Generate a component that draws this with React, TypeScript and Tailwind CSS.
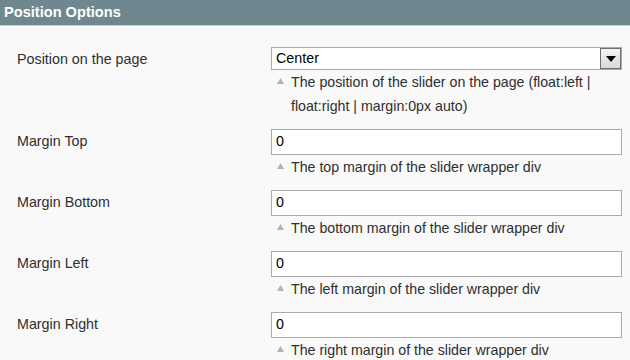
const rows = [
  {
    label: 'Position on the page',
    kind: 'select',
    value: 'Center',
    hint: 'The position of the slider on the page (float:left | float:right | margin:0px auto)',
  },
  { label: 'Margin Top', kind: 'text', value: '0', hint: 'The top margin of the slider wrapper div' },
  { label: 'Margin Bottom', kind: 'text', value: '0', hint: 'The bottom margin of the slider wrapper div' },
  { label: 'Margin Left', kind: 'text', value: '0', hint: 'The left margin of the slider wrapper div' },
  { label: 'Margin Right', kind: 'text', value: '0', hint: 'The right margin of the slider wrapper div' },
];

const Bullet = () => (
  <svg width="7" height="6" viewBox="0 0 7 6" className="mt-[8px] shrink-0">
    <path d="M3.5 0 L7 6 L0 6 Z" fill="#a8b7bc" />
  </svg>
);

export default function App() {
  return (
    <div className="w-[630px] h-[360px] overflow-hidden bg-[#f9f9f9] font-['Liberation_Sans',Arial,sans-serif] text-[#2f2f2f]">
      <div className="h-[26px] bg-[#6f878f] border-b border-[#c9d3d6] px-[4px] flex items-center">
        <h2 className="text-white text-[14.6px] font-bold leading-none">Position Options</h2>
      </div>
      <div className="pt-[21px] pl-[17px] pr-[8px]">
        {rows.map((row) => (
          <div key={row.label} className="flex mb-[11px]">
            <label className="w-[254px] shrink-0 text-[14.3px] leading-[23px] pt-[1px]">{row.label}</label>
            <div className="flex-1">
              {row.kind === 'select' ? (
                <div className="h-[23px] border border-[#aaaaaa] bg-white flex items-center">
                  <span className="flex-1 pl-[4px] text-[14.3px] text-black">{row.value}</span>
                  <div className="w-[21px] h-[21px] border border-[#6e6e6e] bg-gradient-to-b from-[#f4f4f4] to-[#d9d9d9] flex items-center justify-center">
                    <svg width="10" height="6" viewBox="0 0 10 6">
                      <path d="M0 0 H10 L5 6 Z" fill="#000" />
                    </svg>
                  </div>
                </div>
              ) : (
                <div className="h-[26px] border border-[#aaaaaa] bg-white flex items-center pl-[4px] text-[14.3px] text-black">
                  {row.value}
                </div>
              )}
              <div className="flex gap-[7px] pl-[6px] text-[14.2px] leading-[24px] text-[#2f2f2f]">
                <Bullet />
                <span>{row.hint}</span>
              </div>
            </div>
          </div>
        ))}
      </div>
    </div>
  );
}
